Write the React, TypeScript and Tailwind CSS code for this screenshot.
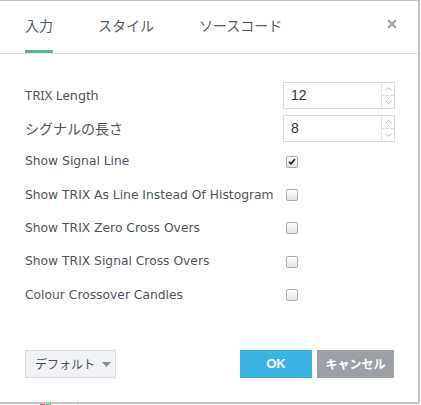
import React from "react";

const font = { fontFamily: '"DejaVu Sans", "Noto Sans CJK JP", sans-serif' };
const cjk = { fontFamily: '"Noto Sans CJK JP", sans-serif' };

function Spin({ value }: { value: string }) {
  return (
    <div className="flex w-[112px] h-[27px] border border-[#d9dbe0] bg-white">
      <div className="flex-1 flex items-center pl-[7px] text-[14px] text-[#333]" style={{ fontFamily: '"Liberation Sans", sans-serif' }}>{value}</div>
      <div className="w-[13px] border-l border-[#e2e4e8] flex flex-col">
        <div className="flex-1 flex items-center justify-center border-b border-[#e2e4e8]">
          <svg width="7" height="4" viewBox="0 0 7 4"><path d="M0.5 3.5L3.5 0.5L6.5 3.5" fill="none" stroke="#aeb8c4" strokeWidth="1" /></svg>
        </div>
        <div className="flex-1 flex items-center justify-center">
          <svg width="7" height="4" viewBox="0 0 7 4"><path d="M0.5 0.5L3.5 3.5L6.5 0.5" fill="none" stroke="#aeb8c4" strokeWidth="1" /></svg>
        </div>
      </div>
    </div>
  );
}

function Check({ checked }: { checked?: boolean }) {
  return (
    <div className="w-[12px] h-[12px] rounded-[2px] border border-[#a9acb3] bg-gradient-to-b from-[#fdfdfd] to-[#e3e4e7] flex items-center justify-center">
      {checked && (
        <svg width="8" height="7" viewBox="0 0 8 7"><path d="M1 3.8L3 5.8L7 1" fill="none" stroke="#222" strokeWidth="1.7" /></svg>
      )}
    </div>
  );
}

export default function App() {
  const rows = [
    { label: "Show Signal Line", checked: true },
    { label: "Show TRIX As Line Instead Of Histogram" },
    { label: "Show TRIX Zero Cross Overs" },
    { label: "Show TRIX Signal Cross Overs" },
    { label: "Colour Crossover Candles" },
  ];
  return (
    <div className="w-[421px] h-[405px] bg-white relative overflow-hidden" style={font}>
      <div className="w-[420px] h-[404px] border-t border-r-2 border-b-2 border-[#c3c3c3] flex flex-col">
        <div className="h-[53px] border-b border-[#dcdde1] flex items-end pl-[25px] pr-[24px] relative">
          <div className="flex items-end gap-[45px] text-[14px] text-[#555b66]" style={cjk}>
            <div className="h-[52px] flex flex-col justify-between pt-[14px]">
              <span className="leading-[20px]">入力</span>
              <div className="h-[3px] bg-[#53b987]" />
            </div>
            <div className="h-[52px] flex flex-col pt-[14px]">
              <span className="leading-[20px]">スタイル</span>
            </div>
            <div className="h-[52px] flex flex-col pt-[14px]">
              <span className="leading-[20px]">ソースコード</span>
            </div>
          </div>
          <div className="absolute right-[21px] top-[18px]">
            <svg width="10" height="10" viewBox="0 0 10 10"><path d="M1 1L9 9M9 1L1 9" stroke="#9aa0ab" strokeWidth="2" /></svg>
          </div>
        </div>
        <div className="flex flex-col pl-[25px] pt-[28px] text-[#4f545e]" style={{ fontSize: "12.3px" }}>
          <div className="flex items-center h-[27px]">
            <div className="w-[258px]" style={{ fontFamily: '"Noto Sans", sans-serif', fontSize: 13 }}>TRIX Length</div>
            <Spin value="12" />
          </div>
          <div className="flex items-center h-[27px] mt-[6px]">
            <div className="w-[258px]" style={{ ...cjk, fontSize: 14 }}>シグナルの長さ</div>
            <Spin value="8" />
          </div>
          <div className="flex flex-col mt-[3px]">
            {rows.map((r, i) => (
              <div key={i} className="flex items-center h-[33.3px]">
                <div className="w-[261px] whitespace-nowrap">{r.label}</div>
                <Check checked={r.checked} />
              </div>
            ))}
          </div>
        </div>
        <div className="flex-1" />
        <div className="flex items-center pl-[25px] pr-[24px] pb-[24px]">
          <div className="h-[28px] w-[91px] border border-[#d6d8dd] bg-[#f1f2f5] flex items-center pl-[9px] gap-[7px] text-[12px] text-[#4a4f5a] whitespace-nowrap" style={cjk}>
            <span>デフォルト</span>
            <svg width="9" height="5" viewBox="0 0 9 5"><path d="M0 0H9L4.5 5Z" fill="#8c9099" /></svg>
          </div>
          <div className="flex-1" />
          <div className="h-[28px] w-[72px] bg-[#3bb3e4] text-white font-bold text-[13px] flex items-center justify-center" style={{ fontFamily: '"Liberation Sans", sans-serif' }}>OK</div>
          <div className="h-[28px] w-[77px] ml-[5px] bg-[#9d9fa6] text-white font-bold text-[12px] flex items-center justify-center whitespace-nowrap" style={cjk}>キャンセル</div>
        </div>
      </div>
      <div className="absolute left-[40px] top-[404px] w-[5px] h-[1px] bg-[#e05060]" />
      <div className="absolute left-[46px] top-[404px] w-[5px] h-[1px] bg-[#53b987]" />
      <div className="absolute left-[77px] top-[404px] w-[1px] h-[1px] bg-[#e0e0e0]" />
    </div>
  );
}
